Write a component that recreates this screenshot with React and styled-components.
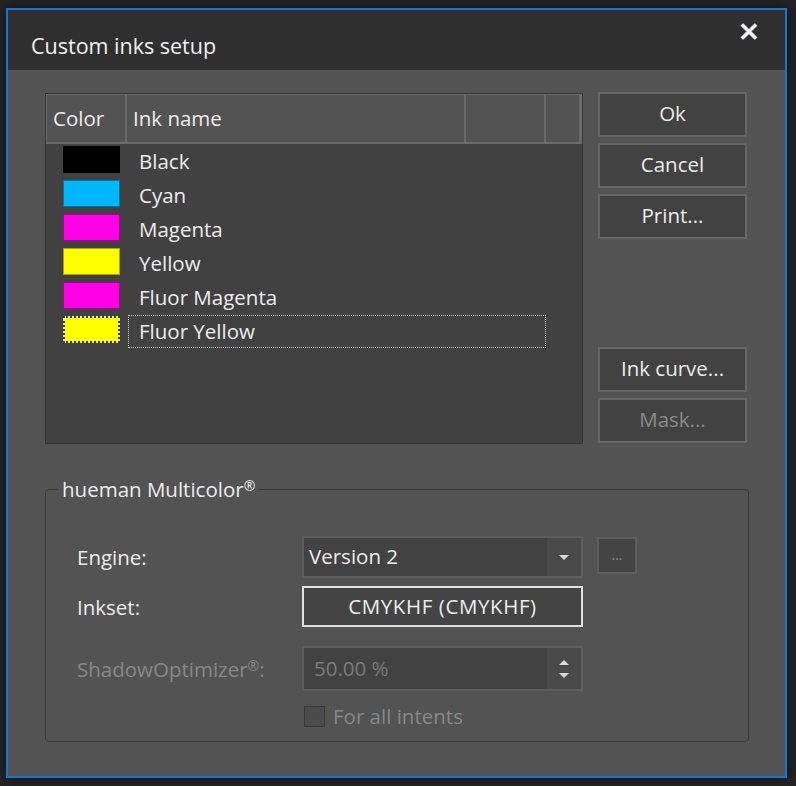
import React from "react";
import styled, { createGlobalStyle } from "styled-components";

const GlobalStyle = createGlobalStyle`
  html, body {
    margin: 0;
    padding: 0;
    background: #232323;
  }
  body {
    width: 796px;
    height: 786px;
    overflow: hidden;
    font-family: "Open Sans", "Noto Sans", sans-serif;
  }
`;

const inks = [
  { name: "Black", color: "#000000" },
  { name: "Cyan", color: "#00b7ff" },
  { name: "Magenta", color: "#ff00e6" },
  { name: "Yellow", color: "#ffff00" },
  { name: "Fluor Magenta", color: "#ff00e6" },
  { name: "Fluor Yellow", color: "#ffff00", selected: true },
];

const Desktop = styled.div`
  padding: 8px 0 0 6px;
`;

const Window = styled.div`
  width: 781px;
  height: 770px;
  box-sizing: border-box;
  border: 2px solid #1677d2;
  display: flex;
  flex-direction: column;
  background: #535353;
  box-shadow: 0 0 10px rgba(0, 0, 0, 0.5);
`;

const TitleBar = styled.div`
  height: 60px;
  flex-shrink: 0;
  background: #2f2f2f;
  display: flex;
  align-items: center;
  justify-content: space-between;
  padding: 0 25px 0 23px;
  color: #f2f2f2;
  font-size: 21.5px;
`;

const Title = styled.span`
  margin-top: 11px;
`;

const Close = styled.span`
  font-size: 26px;
  font-weight: 700;
  line-height: 1;
  margin-top: -18px;
`;

const Body = styled.div`
  flex: 1;
  padding: 23px 36px 0 37px;
  display: flex;
  flex-direction: column;
`;

const TopRow = styled.div`
  display: flex;
  gap: 15px;
`;

const ListBox = styled.div`
  width: 538px;
  height: 351px;
  box-sizing: border-box;
  border: 1px solid #363636;
  background: #414141;
  display: flex;
  flex-direction: column;
`;

const Header = styled.div`
  display: flex;
  height: 49px;
  flex-shrink: 0;
  background: #535353;
  border: 1px solid #6a6a6a;
  border-bottom: none;
`;

const HeadCell = styled.div`
  width: ${(p) => p.$w}px;
  box-sizing: border-box;
  border: 1px solid #6a6a6a;
  border-width: 0 2px 2px 0;
  display: flex;
  align-items: center;
  padding: 0 0 1px 6px;
  color: #ededed;
  font-size: 20.5px;
`;

const Rows = styled.div`
  display: flex;
  flex-direction: column;
`;

const Row = styled.div`
  height: 34px;
  display: flex;
  align-items: center;
`;

const Swatch = styled.div`
  width: 57px;
  height: 27px;
  box-sizing: border-box;
  margin: -3px 8px 0 17px;
  background: ${(p) => p.$color};
  border: ${(p) => (p.$selected ? "2px dotted #2a2ad0" : "1px solid rgba(0,0,0,0.35)")};
`;

const InkName = styled.div`
  width: 418px;
  height: 33px;
  box-sizing: border-box;
  display: flex;
  align-items: center;
  padding: 0 0 1px 10px;
  color: #ededed;
  font-size: 20.5px;
  border: 1px dotted ${(p) => (p.$selected ? "#c8c8c8" : "transparent")};
`;

const ButtonColumn = styled.div`
  width: 149px;
  height: 351px;
  margin-top: -1px;
  display: flex;
  flex-direction: column;
  justify-content: space-between;
`;

const ButtonGroup = styled.div`
  display: flex;
  flex-direction: column;
  gap: 6px;
`;

const Button = styled.button`
  height: 45px;
  width: 100%;
  box-sizing: border-box;
  background: #424242;
  border: 2px solid #666666;
  color: ${(p) => (p.disabled ? "#8a8a8a" : "#ececec")};
  font-family: inherit;
  font-size: 20.5px;
  padding: 0 0 3px;
`;

const Group = styled.div`
  position: relative;
  margin-top: 45px;
  width: 704px;
  height: 253px;
  box-sizing: border-box;
  border: 1px solid #3a3a3a;
  border-radius: 4px;
  padding: 46px 0 0 31px;
`;

const Legend = styled.div`
  position: absolute;
  top: -15px;
  left: 12px;
  padding: 0 4px;
  background: #535353;
  color: #ededed;
  font-size: 20.5px;
`;

const Mark = styled.sup`
  font-size: 14px;
  vertical-align: 6px;
  line-height: 0;
`;

const FormRow = styled.div`
  display: grid;
  grid-template-columns: 211px 281px 40px;
  column-gap: 14px;
  align-items: center;
  margin-top: ${(p) => p.$gap || 0}px;
`;

const Label = styled.div`
  color: ${(p) => (p.$disabled ? "#888888" : "#ececec")};
  font-size: 20.5px;
`;

const Field = styled.div`
  height: ${(p) => p.$h}px;
  box-sizing: border-box;
  border: 2px solid #5e5e5e;
  background: #424242;
  display: flex;
  align-items: stretch;
`;

const FieldText = styled.div`
  flex: 1;
  display: flex;
  align-items: center;
  padding: 0 0 2px ${(p) => (p.$disabled ? 10 : 5)}px;
  color: ${(p) => (p.$disabled ? "#7a7a7a" : "#ededed")};
  font-size: 20.5px;
`;

const ArrowBox = styled.div`
  width: 34px;
  background: #4a4a4a;
  display: flex;
  flex-direction: column;
  align-items: center;
  justify-content: center;
  gap: 8px;
`;

const Tri = styled.div`
  width: 0;
  height: 0;
  border-left: 5px solid transparent;
  border-right: 5px solid transparent;
  ${(p) =>
    p.$up
      ? "border-bottom: 5px solid #d8d8d8;"
      : "border-top: 5px solid #d8d8d8;"}
`;

const SmallButton = styled.div`
  width: 40px;
  height: 37px;
  box-sizing: border-box;
  border: 2px solid #5e5e5e;
  background: #444444;
  color: #8a8a8a;
  font-size: 14px;
  display: flex;
  align-items: center;
  justify-content: center;
  padding-bottom: 2px;
  margin-top: -3px;
`;

const InksetButton = styled.div`
  height: 41px;
  box-sizing: border-box;
  border: 2px solid #e2e2e2;
  background: #444444;
  color: #ededed;
  font-size: 20.5px;
  letter-spacing: 0.6px;
  display: flex;
  align-items: center;
  justify-content: center;
  padding-bottom: 2px;
`;

const CheckRow = styled.div`
  display: flex;
  align-items: center;
  gap: 8px;
  padding-left: 2px;
  color: #888888;
  font-size: 20.5px;
`;

const CheckBox = styled.div`
  width: 21px;
  height: 21px;
  box-sizing: border-box;
  border: 1px solid #383838;
  background: #4b4b4b;
`;

export default function App() {
  return (
    <>
      <GlobalStyle />
      <Desktop>
        <Window>
          <TitleBar>
            <Title>Custom inks setup</Title>
            <Close>✕</Close>
          </TitleBar>
          <Body>
            <TopRow>
              <ListBox>
                <Header>
                  <HeadCell $w={80}>Color</HeadCell>
                  <HeadCell $w={339}>Ink name</HeadCell>
                  <HeadCell $w={80} />
                  <HeadCell $w={35} />
                </Header>
                <Rows>
                  {inks.map((ink) => (
                    <Row key={ink.name}>
                      <Swatch $color={ink.color} $selected={ink.selected} />
                      <InkName $selected={ink.selected}>{ink.name}</InkName>
                    </Row>
                  ))}
                </Rows>
              </ListBox>
              <ButtonColumn>
                <ButtonGroup>
                  <Button>Ok</Button>
                  <Button>Cancel</Button>
                  <Button>Print...</Button>
                </ButtonGroup>
                <ButtonGroup>
                  <Button>Ink curve...</Button>
                  <Button disabled>Mask...</Button>
                </ButtonGroup>
              </ButtonColumn>
            </TopRow>
            <Group>
              <Legend>
                hueman Multicolor<Mark>®</Mark>
              </Legend>
              <FormRow>
                <Label>Engine:</Label>
                <Field $h={42}>
                  <FieldText>Version 2</FieldText>
                  <ArrowBox>
                    <Tri />
                  </ArrowBox>
                </Field>
                <SmallButton>...</SmallButton>
              </FormRow>
              <FormRow $gap={8}>
                <Label>Inkset:</Label>
                <InksetButton>CMYKHF (CMYKHF)</InksetButton>
              </FormRow>
              <FormRow $gap={19}>
                <Label $disabled>
                  ShadowOptimizer<Mark>®</Mark>:
                </Label>
                <Field $h={45}>
                  <FieldText $disabled>50.00 %</FieldText>
                  <ArrowBox>
                    <Tri $up />
                    <Tri />
                  </ArrowBox>
                </Field>
              </FormRow>
              <FormRow $gap={11}>
                <div />
                <CheckRow>
                  <CheckBox />
                  For all intents
                </CheckRow>
              </FormRow>
            </Group>
          </Body>
        </Window>
      </Desktop>
    </>
  );
}
